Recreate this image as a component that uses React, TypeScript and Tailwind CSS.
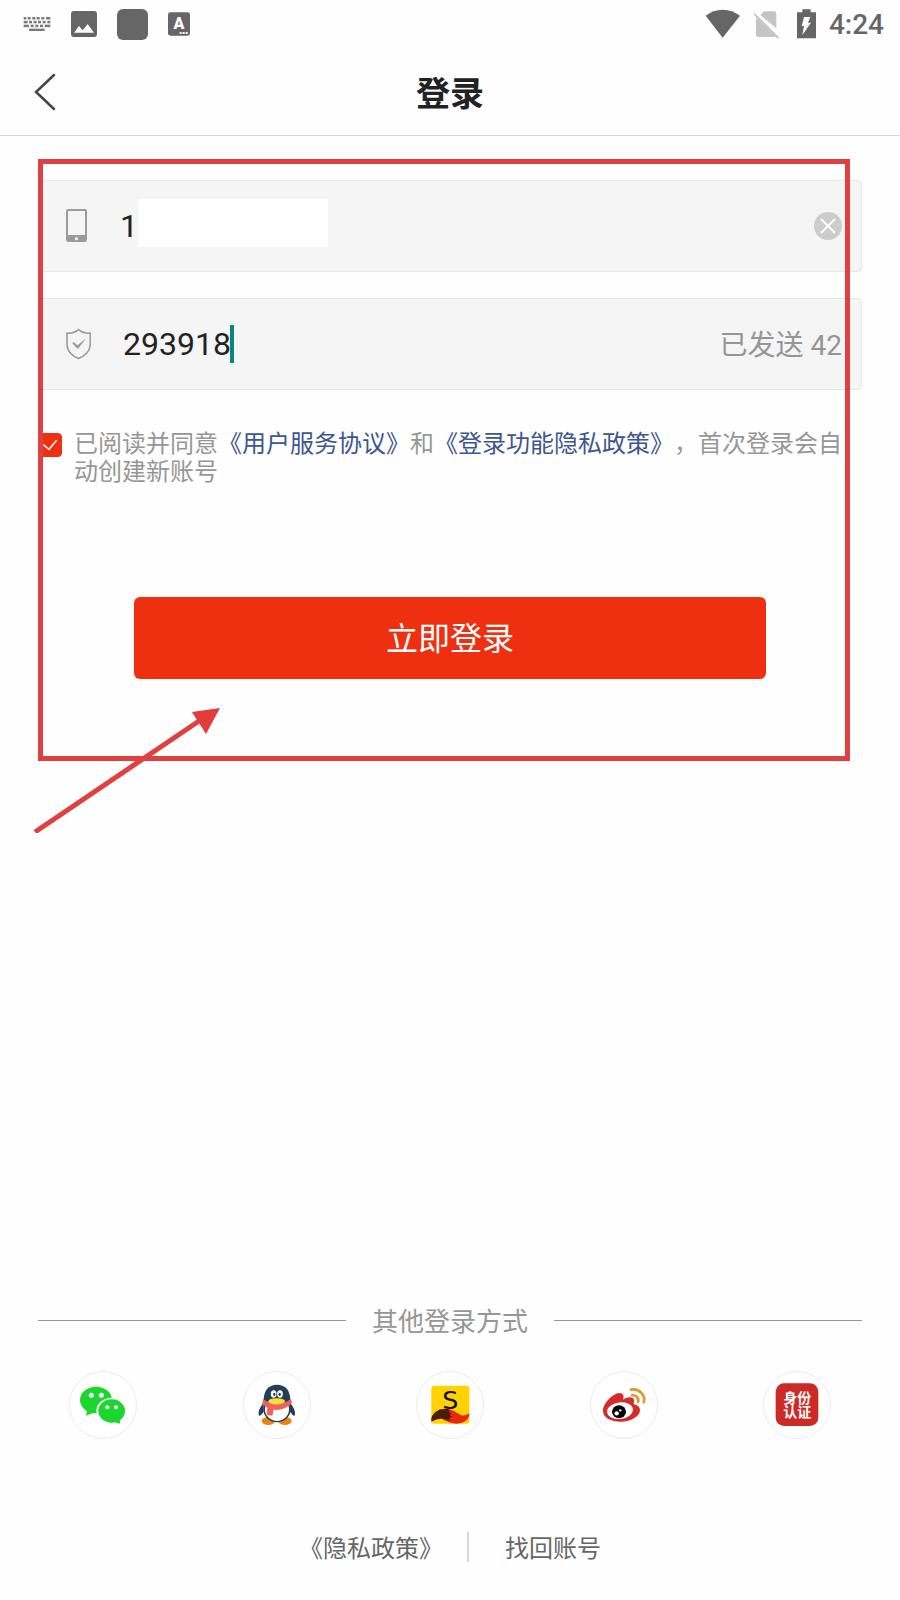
import React, { useState } from "react";

function KeyboardIcon() {
  const rows = [
    [[68, 8], [80, 9], [94, 9], [107, 9], [121, 9], [135, 13]],
    [[68, 12], [84, 9], [98, 9], [111, 9], [125, 9], [139, 9]],
    [[68, 16], [89, 9], [103, 9], [117, 9], [131, 17]],
  ];
  return (
    <svg className="h-4 w-7" viewBox="66 49 84 48" fill="#7a7a7a" aria-hidden="true">
      {rows.map((row, r) =>
        row.map(([x, w]) => <rect key={`${r}-${x}`} x={x} y={52 + r * 11.5} width={w} height="7.5" />),
      )}
      <rect x="84" y="87" width="47" height="7" />
    </svg>
  );
}

function PictureIcon() {
  return (
    <svg className="size-[26px]" viewBox="0 0 78 78" aria-hidden="true">
      <rect width="78" height="78" rx="9" fill="#666" />
      <path d="M9 65 24 45l11 13 15-19 19 26Z" fill="#fff" />
    </svg>
  );
}

function LetterIcon() {
  return (
    <svg className="h-6 w-[22px]" viewBox="0 0 66 72" aria-hidden="true">
      <rect y="1" width="66" height="70" rx="7" fill="#666" />
      <text x="33" y="52" textAnchor="middle" fontSize="48" fontWeight="900" fill="#fff" className="font-[Roboto]">
        A
      </text>
      <path d="M35 60h6v6h-6zM44 60h6v6h-6zM53 60h6v6h-6z" fill="#fff" />
    </svg>
  );
}

function WifiIcon() {
  return (
    <svg className="h-[30px] w-9" viewBox="0 0 108 90" fill="#666" aria-hidden="true">
      <path d="M2 20Q25 2 53 2t52 18L53 86Z" />
    </svg>
  );
}

function NoSimIcon() {
  return (
    <svg className="h-[30px] w-[30px]" viewBox="3 0 90 90" aria-hidden="true">
      <path d="M22 18 33 7h30q7 0 7 7v44Z" fill="#c4c4c4" />
      <path d="M9 24 68 82q-2 2-6 2H16q-7 0-7-7Z" fill="#c4c4c4" />
      <path d="M3 14 76 87" stroke="#c4c4c4" strokeWidth="6" />
    </svg>
  );
}

function BatteryIcon() {
  return (
    <svg className="h-[30px] w-[19px]" viewBox="588 26 57 90" aria-hidden="true">
      <path d="M604 27h25v9h16v78h-57V36h16Z" fill="#666" />
      <path d="M609 50h19l-7 17h9l-26 37 5-27h-7Z" fill="#fff" />
    </svg>
  );
}

function StatusBar() {
  return (
    <div className="flex h-12 items-center justify-between pr-4 pl-[23px]">
      <div className="flex items-center gap-5">
        <KeyboardIcon />
        <PictureIcon />
        <span className="size-[31px] rounded-md bg-[#666]" />
        <LetterIcon />
      </div>
      <div className="flex items-center gap-[13px]">
        <WifiIcon />
        <NoSimIcon />
        <BatteryIcon />
        <span className="pt-0.5 text-[28px] leading-8 font-medium text-[#666]">4:24</span>
      </div>
    </div>
  );
}

function PhoneIcon() {
  return (
    <svg className="h-[34px] w-[22px] shrink-0" viewBox="0 0 66 102" aria-hidden="true">
      <rect width="63" height="99" rx="7" fill="#9b9b9b" />
      <rect x="6" y="6" width="51" height="72" fill="#f5f5f5" />
      <circle cx="31.500" cy="89" r="4.500" fill="#fff" />
    </svg>
  );
}

function ShieldIcon() {
  return (
    <svg className="h-8 w-[25px] shrink-0" viewBox="137 533 76 96" aria-hidden="true">
      <path
        d="M175 537C165 545 152 549 140 548v32c0 24 18 39 35 45 17-6 36-21 36-45v-32c-13 1-26-3-36-11Z"
        fill="none"
        stroke="#9b9b9b"
        strokeWidth="5"
      />
      <path d="m156 579 5-3 11 9 27-22-26 33Z" fill="#9b9b9b" />
    </svg>
  );
}

function WechatLogo() {
  return (
    <svg className="size-full" viewBox="-1 0 204 204" aria-hidden="true">
      <ellipse cx="80" cy="87" rx="48" ry="40" fill="#1bd62c" />
      <path d="M54 115 50 134 78 123Z" fill="#1bd62c" />
      <circle cx="66" cy="73" r="7.500" fill="#fff" />
      <circle cx="96" cy="73" r="7.500" fill="#fff" />
      <ellipse cx="127" cy="120" rx="46" ry="40" fill="#fff" />
      <ellipse cx="127" cy="120" rx="40" ry="35" fill="#1bd62c" />
      <path d="M132 152 153 158 150 142Z" fill="#1bd62c" />
      <circle cx="114" cy="109" r="6" fill="#fff" />
      <circle cx="140" cy="109" r="6" fill="#fff" />
    </svg>
  );
}

function QQLogo() {
  return (
    <svg className="size-full" viewBox="0 0 204 204" aria-hidden="true">
      <ellipse cx="76" cy="150" rx="20" ry="12" fill="#ee8311" />
      <ellipse cx="126" cy="150" rx="20" ry="12" fill="#ee8311" />
      <path d="M62 96C50 108 44 124 48 134q4 2 14-12ZM141 96c12 12 18 28 14 38q-4 2-14-12Z" fill="#263d56" />
      <ellipse cx="102" cy="115" rx="41" ry="39" fill="#263d56" />
      <ellipse cx="102" cy="115" rx="36" ry="35" fill="#fff" />
      <path d="M62 94C60 60 76 41 102 41s42 19 40 53q-40 26-80 0Z" fill="#263d56" />
      <ellipse cx="92" cy="69" rx="8.500" ry="11" fill="#fff" />
      <ellipse cx="111" cy="69" rx="8.500" ry="11" fill="#fff" />
      <ellipse cx="94" cy="70" rx="3.500" ry="5" fill="#263d56" />
      <ellipse cx="110" cy="70" rx="3.500" ry="5" fill="#263d56" />
      <path d="M60 84q42 30 84 0l3 12q-20 21-46 21-24 0-43-19Z" fill="#f0625f" />
      <path d="M73 106h19l-3 27q-8 2-17-2Z" fill="#f0625f" />
      <ellipse cx="101" cy="91" rx="25" ry="9.500" fill="#fbe03a" />
    </svg>
  );
}

function SogouLogo() {
  return (
    <svg className="size-full" viewBox="-2 0 204 204" aria-hidden="true">
      <rect x="44" y="44" width="114" height="114" rx="9" fill="#ffd200" />
      <text x="101" y="114" textAnchor="middle" fontSize="76" fill="#111" className="font-['DejaVu_Sans']">
        S
      </text>
      <path d="M80 114c24-3 40 12 52 18 10 4 18 0 26-5 1 17-14 31-38 31-18 0-30-8-40-11Z" fill="#e6280f" />
      <path d="M44 152v-11c8-20 26-30 50-27l5 5-3 4 7 4-4 5 7 5-8 3 3 9-9-2q-24-9-48 5Z" fill="#4a1c0b" />
    </svg>
  );
}

function WeiboLogo() {
  return (
    <svg className="size-full" viewBox="0 0 204 204" aria-hidden="true">
      <path
        d="M39 121C38 98 68 67 88 66c13 0 15 9 11 20 14-9 31-10 33 1 1 5-1 9-1 12 12 3 19 9 19 18 0 20-28 35-58 35-29 0-52-11-53-31Z"
        fill="#d52b2a"
      />
      <ellipse cx="90" cy="119" rx="39" ry="25" transform="rotate(-7 90 119)" fill="#fff" />
      <ellipse cx="87" cy="122" rx="21" ry="19" fill="#000" />
      <circle cx="80" cy="127" r="6.500" fill="#fff" />
      <circle cx="91" cy="118" r="3.500" fill="#fff" />
      <path
        d="M123 56c24-5 45 17 38 38M126 73c13-2 22 9 18 20"
        fill="none"
        stroke="#dd9a2d"
        strokeWidth="8"
        strokeLinecap="round"
      />
    </svg>
  );
}

function IdentityLogo() {
  return (
    <svg className="size-full" viewBox="0 0 204 204" aria-hidden="true">
      <rect x="38" y="37" width="128" height="128" rx="25" fill="#cb2a26" />
      <g fill="#fff" fontSize="42" fontWeight="700" textAnchor="middle" className="font-['Noto_Sans_CJK_SC']">
        <text x="103" y="97">身份</text>
        <text x="103" y="138">认证</text>
      </g>
    </svg>
  );
}

const providers = [
  { name: "微信", Logo: WechatLogo },
  { name: "QQ", Logo: QQLogo },
  { name: "搜狗", Logo: SogouLogo },
  { name: "微博", Logo: WeiboLogo },
  { name: "身份认证", Logo: IdentityLogo },
];

function Highlight() {
  return (
    <div className="pointer-events-none absolute inset-0">
      <div className="absolute top-[23px] right-[50px] bottom-0 left-[38px] border-5 border-[#e04040]" />
      <svg className="absolute -bottom-[72px] left-[34px] h-[126px] w-[186px]" viewBox="0 0 186 126" aria-hidden="true">
        <path d="M1 125 165 14" stroke="#e04040" strokeWidth="5" />
        <path d="M186 1 158 5l14 22Z" fill="#e43c3c" />
      </svg>
    </div>
  );
}

const fieldClass = "flex h-[92px] items-center rounded-sm border border-[#e6e6e6] bg-[#f5f5f5] pr-[19px] pl-[27px]";
const inputClass = "w-full bg-transparent text-[32px] leading-10 text-[#222] outline-none";

export default function App() {
  const [phone, setPhone] = useState("1");
  const [code, setCode] = useState("293918");
  const [agreed, setAgreed] = useState(true);

  return (
    <div className="flex min-h-screen flex-col bg-[#fefefe] font-[Roboto,'Noto_Sans_CJK_SC',sans-serif]">
      <StatusBar />
      <header className="grid h-[88px] grid-cols-[1fr_auto_1fr] items-center border-b border-[#d6d6d6] px-[34px]">
        <button type="button" aria-label="返回" className="w-6">
          <svg className="h-[38px] w-[22px]" viewBox="0 0 22 38" fill="none" aria-hidden="true">
            <path d="M20 2 2 19l18 17" stroke="#444" strokeWidth="2.500" strokeLinecap="round" />
          </svg>
        </button>
        <h1 className="pt-1 text-[34px] leading-10 font-bold text-[#222]">登录</h1>
      </header>

      <form className="relative px-[38px] pt-11 pb-[82px]" onSubmit={(e) => e.preventDefault()}>
        <div className={fieldClass}>
          <PhoneIcon />
          <div className="relative ml-8 flex-1">
            <input
              type="tel"
              aria-label="手机号"
              value={phone}
              onChange={(e) => setPhone(e.target.value)}
              className={inputClass}
            />
            <span className="absolute -top-[7px] left-[18px] h-12 w-[190px] bg-white" />
          </div>
          <button type="button" aria-label="清除" onClick={() => setPhone("")}>
            <svg className="size-7" viewBox="0 0 28 28" aria-hidden="true">
              <circle cx="14" cy="14" r="14" fill="#ccc" />
              <path d="m7.500 7.500 13 13m0-13-13 13" stroke="#fff" strokeWidth="2" strokeLinecap="round" />
            </svg>
          </button>
        </div>

        <div className={`${fieldClass} mt-[26px]`}>
          <ShieldIcon />
          <div className="relative ml-8 flex-1">
            <input
              type="text"
              inputMode="numeric"
              aria-label="验证码"
              value={code}
              onChange={(e) => setCode(e.target.value)}
              className={inputClass}
            />
            <span className="absolute top-px left-[107px] h-[38px] w-1 bg-[#0b8577]" />
          </div>
          <span className="pt-1 text-[28px] leading-10 text-[#969696]">已发送 42</span>
        </div>

        <div className="mt-10 flex items-start">
          <span className="relative mt-[3px] size-6 shrink-0">
            <input
              id="agree"
              type="checkbox"
              checked={agreed}
              onChange={(e) => setAgreed(e.target.checked)}
              className="block size-6 appearance-none rounded border border-[#ee2f10] checked:bg-[#ee2f10]"
            />
            <svg className="pointer-events-none absolute inset-0 size-6" viewBox="0 0 72 72" fill="none" aria-hidden="true">
              <path d="m16 35 17 14 23-27" stroke="#fff" strokeWidth="4.500" />
            </svg>
          </span>
          <label
            htmlFor="agree"
            className="ml-3 flex-1 text-2xl leading-7 text-[#969696] [text-spacing-trim:space-all]"
          >
            已阅读并同意
            <a href="#service" className="text-[#3d5590]">《用户服务协议》</a>和
            <a href="#privacy" className="text-[#3d5590]">《登录功能隐私政策》</a>
            ，首次登录会自动创建新账号
          </label>
        </div>

        <div className="mt-[111px] px-24">
          <button type="submit" className="h-[82px] w-full rounded-md bg-[#ee2f10] pt-0.5 text-[32px] text-white">
            立即登录
          </button>
        </div>
        <Highlight />
      </form>

      <footer className="mt-auto pb-[38px]">
        <div className="flex h-[34px] items-center gap-[26px] px-[38px]">
          <span className="h-px flex-1 bg-[#969696]" />
          <h2 className="pt-1 text-[26px] leading-9 text-[#969696]">其他登录方式</h2>
          <span className="h-px flex-1 bg-[#969696]" />
        </div>
        <div className="mt-[34px] flex justify-between px-[69px]">
          {providers.map(({ name, Logo }) => (
            <button
              key={name}
              type="button"
              aria-label={name}
              className="size-[68px] rounded-full bg-white outline outline-1 -outline-offset-1 outline-[#ececec]"
            >
              <Logo />
            </button>
          ))}
        </div>
        <div className="mt-[93px] flex h-[30px] items-center justify-center text-2xl leading-[30px] text-[#666]">
          <a href="#policy" className="pt-1 pr-6 [text-spacing-trim:space-all]">《隐私政策》</a>
          <span className="h-[30px] w-0.5 bg-[#d8d8d8]" />
          <a href="#recover" className="pt-1 pl-9">找回账号</a>
        </div>
      </footer>
    </div>
  );
}
